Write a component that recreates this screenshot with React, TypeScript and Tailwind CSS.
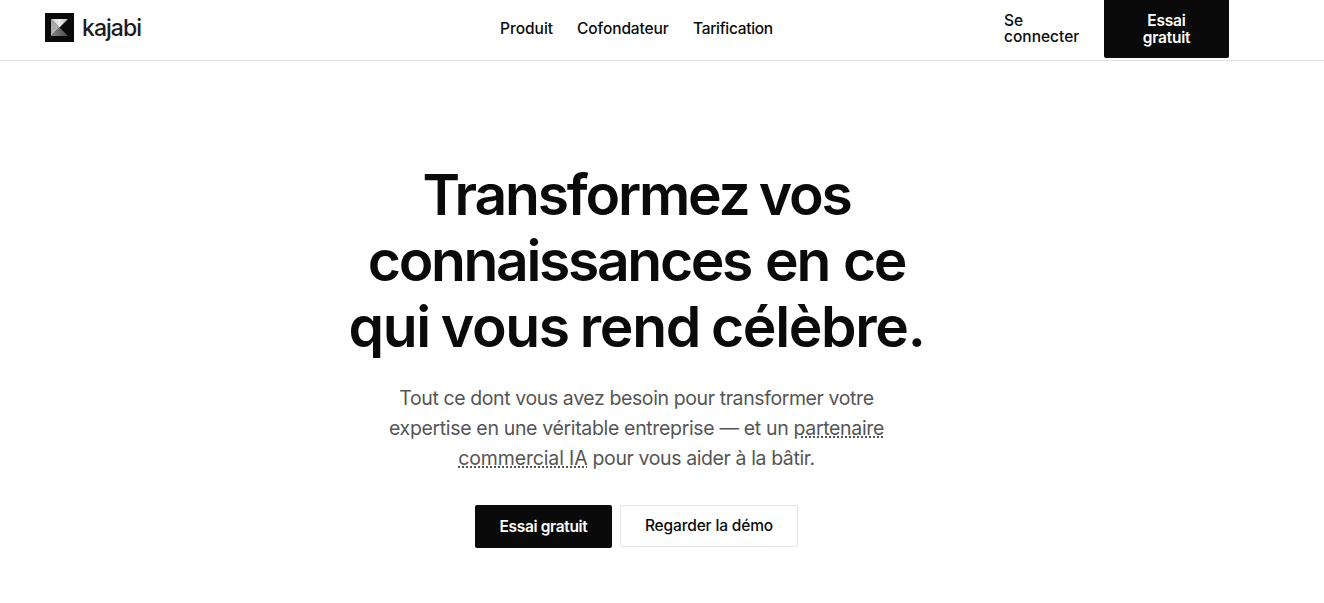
const navLinks = [
  { label: "Produit", cls: "w-[53px]" },
  { label: "Cofondateur", cls: "w-[92px] tracking-[-0.1px]" },
  { label: "Tarification", cls: "w-[80px] tracking-[-0.3px]" },
];

function Logo() {
  return (
    <a href="#" className="flex items-start">
      <svg width="29" height="29" viewBox="0 0 29 29">
        <defs>
          <linearGradient id="kLeft" x1="0" y1="0" x2="0" y2="1">
            <stop offset="0" stopColor="#a2a2a2" />
            <stop offset="1" stopColor="#b8b8b8" />
          </linearGradient>
          <linearGradient id="kTop" x1="0" y1="0" x2="1" y2="0">
            <stop offset="0" stopColor="#c9c9c9" />
            <stop offset="0.5" stopColor="#ececec" />
            <stop offset="1" stopColor="#b5b5b5" />
          </linearGradient>
          <linearGradient id="kBottom" x1="0" y1="0" x2="1" y2="0">
            <stop offset="0" stopColor="#8a8a8a" />
            <stop offset="1" stopColor="#4a4a4a" />
          </linearGradient>
        </defs>
        <rect width="29" height="29" fill="#0a0a0a" />
        <path d="M6 6 L14.5 14.5 L6 23 Z" fill="url(#kLeft)" />
        <path d="M6 6 H23 L14.5 14.5 Z" fill="url(#kTop)" />
        <path d="M6 23 H23 L14.5 14.5 Z" fill="url(#kBottom)" />
      </svg>
      <span className="ml-2 text-[23px] leading-[30px] font-medium tracking-[-0.95px] text-[#1c1c1c]">kajabi</span>
    </a>
  );
}

function Header() {
  return (
    <header className="h-[61px] border-b border-[#e2e2e2]">
      <div className="grid h-[58px] w-[1273px] grid-cols-[455px_1fr_269px] pl-[45px] pr-[44px]">
        <div className="flex items-start pt-[13px]">
          <Logo />
        </div>
        <nav className="flex items-center gap-6 text-[15.5px] font-medium">
          {navLinks.map((link) => (
            <a key={link.label} href="#" className={`whitespace-nowrap ${link.cls}`}>
              {link.label}
            </a>
          ))}
        </nav>
        <div className="flex items-center justify-between pl-[44px]">
          <a href="#" className="w-[76px] text-[15.5px] leading-4 font-medium">
            Se
            <br />
            connecter
          </a>
          <a
            href="#"
            className="flex h-[58px] w-[125px] items-center justify-center rounded-b-[2px] bg-[#0a0a0a] text-center text-[15.5px] leading-[17px] font-semibold tracking-[-0.2px] text-white"
          >
            Essai
            <br />
            gratuit
          </a>
        </div>
      </div>
    </header>
  );
}

function Hero() {
  return (
    <main className="flex w-[1273px] flex-col items-center pt-[101px]">
      <h1 className="flex flex-col items-center text-[57px] leading-[66px] font-semibold whitespace-nowrap">
        <span className="tracking-[-2.2px] [word-spacing:-2px]">Transformez vos</span>
        <span className="tracking-[-2.35px] [word-spacing:2px]">connaissances en ce</span>
        <span className="tracking-[-1.35px] [word-spacing:-2px]">qui vous rend célèbre.</span>
      </h1>

      <p className="mt-[23px] flex flex-col items-center text-[19.5px] leading-[30px] whitespace-nowrap text-[#555]">
        <span className="tracking-[-0.4px]">Tout ce dont vous avez besoin pour transformer votre</span>
        <span className="tracking-[-0.34px]">
          expertise en une véritable entreprise — et un{" "}
          <a href="#" className="underline decoration-dotted decoration-2 underline-offset-1">partenaire</a>
        </span>
        <span className="tracking-[-0.4px]">
          <a href="#" className="tracking-[-0.15px] underline decoration-dotted decoration-2 underline-offset-1">commercial IA</a>
          {" "}pour vous aider à la bâtir.
        </span>
      </p>

      <div className="mt-8 flex items-start gap-2 whitespace-nowrap">
        <a
          href="#"
          className="flex h-[43px] w-[137px] items-center justify-center rounded-[2px] bg-[#0a0a0a] pt-px text-[15.5px] font-semibold tracking-[-0.35px] text-white"
        >
          Essai gratuit
        </a>
        <a
          href="#"
          className="flex h-[42px] w-[178px] items-center justify-center rounded-[2px] border border-[#e5e5e5] text-[15.5px] font-medium tracking-[-0.15px]"
        >
          Regarder la démo
        </a>
      </div>
    </main>
  );
}

export default function App() {
  return (
    <div className="h-[603px] overflow-hidden bg-white font-['Inter',sans-serif] text-[#0a0a0a]">
      <Header />
      <Hero />
    </div>
  );
}
